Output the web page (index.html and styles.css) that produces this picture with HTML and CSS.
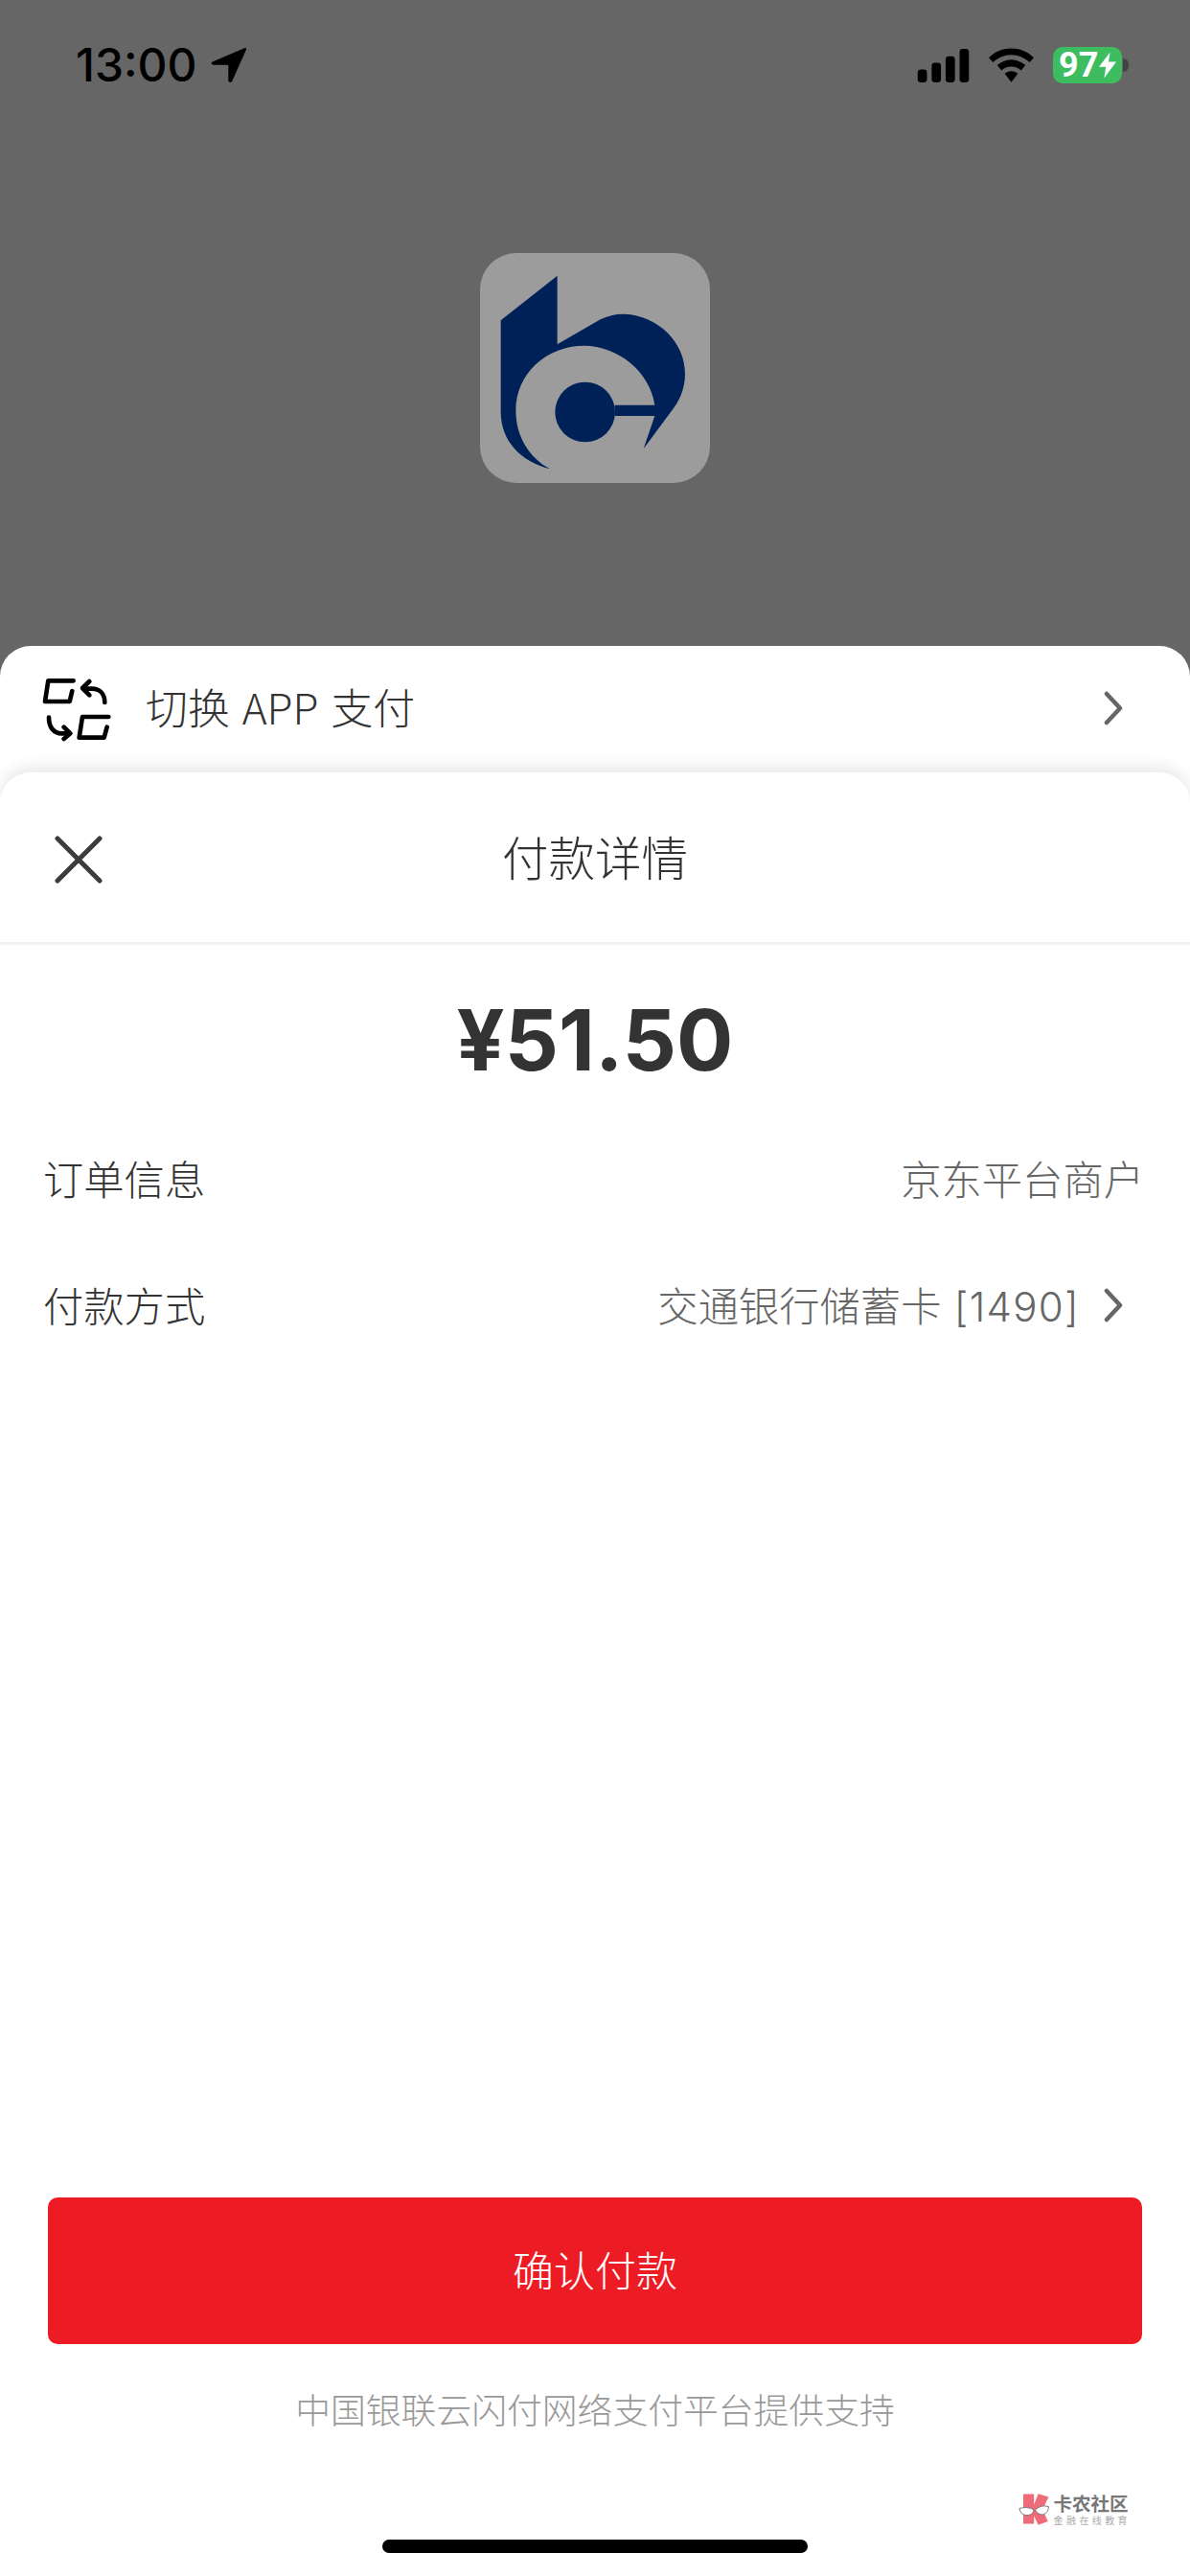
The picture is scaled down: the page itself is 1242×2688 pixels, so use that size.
FILE: index.html
```html
<!DOCTYPE html>
<html lang="zh-CN">
<head>
    <meta charset="UTF-8">
    <meta name="viewport" content="width=device-width, initial-scale=1.0">
    <title>付款详情</title>
    <link rel="stylesheet" href="styles.css">
</head>
<body>
    <div class="screen">
        <div class="status-bar">
            <div class="status-left">
                <span class="clock">13:00</span>
                <svg class="location" viewBox="0 0 110 110">
                    <path d="M103 3 L5 45 Q-2 50 6 54 L49 54 Q53 54 53 58 L53 103 Q58 111 64 104 L107 8 Q108 1 103 3 Z"/>
                </svg>
            </div>
            <div class="status-right">
                <svg class="signal" viewBox="0 0 56 36">
                    <rect x="0" y="22" width="10" height="14" rx="3.5"/>
                    <rect x="15" y="15" width="10" height="21" rx="3.5"/>
                    <rect x="30" y="8" width="10" height="28" rx="3.5"/>
                    <rect x="45" y="0" width="10" height="36" rx="3.5"/>
                </svg>
                <svg class="wifi" viewBox="0 0 48 36">
                    <path d="M24 0 C34 0 42 4 48 10 L43.500 15 C38 10 31.500 7 24 7 C16.500 7 10 10 4.500 15 L0 10 C6 4 14 0 24 0 Z"/>
                    <path d="M24 12 C30 12 35 14.500 39 18 L34.500 23.500 C31.500 21 28 19.500 24 19.500 C20 19.500 16.500 21 13.500 23.500 L9 18 C13 14.500 18 12 24 12 Z"/>
                    <path d="M24 24.500 C27 24.500 29 25.500 31 27 L24 36 L17 27 C19 25.500 21 24.500 24 24.500 Z"/>
                </svg>
                <div class="battery">
                    <div class="battery-body">
                        <span>97</span>
                        <svg class="bolt" viewBox="0 0 20 30">
                            <path d="M13 0 L0 17 H8 L6 30 L20 11 H11 Z"/>
                        </svg>
                    </div>
                    <div class="battery-nub"></div>
                </div>
            </div>
        </div>

        <div class="bank-logo">
            <svg viewBox="93 72 720 720">
                <path d="M158 283 L335 143 V358 L470 280 Q505 262 545 263 C650 268 735 350 735 450 C735 500 715 540 690 570 L605 685 L640 582 H515 V548 H640 C625 440 520 362 420 362 C300 362 205 450 205 565 C205 650 250 715 312 748 C220 725 158 660 158 570 Z"/>
                <circle cx="422" cy="570" r="94"/>
            </svg>
        </div>

        <div class="switch-sheet">
            <div class="switch-row">
                <svg class="switch-icon" viewBox="0 0 270 240">
                    <path d="M122 40 H43 L33 105 H110 L118 72"/>
                    <path d="M232 153 H150 L140 218 H218 L227 185"/>
                    <path d="M220 108 C220 82 205 65 180 65 H155"/>
                    <path d="M172 42 L150 63 L172 85"/>
                    <path d="M45 155 C45 185 60 205 85 205 H108"/>
                    <path d="M92 185 L112 205 L92 222"/>
                </svg>
                <span class="switch-label">切换 APP 支付</span>
                <svg class="chevron" viewBox="0 0 20 36">
                    <path d="M3 3 L17 18 L3 33"/>
                </svg>
            </div>

            <div class="pay-sheet">
                <div class="pay-header">
                    <svg class="close-icon" viewBox="0 0 50 50">
                        <path d="M3 3 L47 47 M47 3 L3 47"/>
                    </svg>
                    <span class="pay-title">付款详情</span>
                </div>

                <div class="amount">¥51.50</div>

                <div class="info-row">
                    <span>订单信息</span>
                    <span class="info-value">京东平台商户</span>
                </div>
                <div class="info-row">
                    <span>付款方式</span>
                    <span class="info-value">
                        <span>交通银行储蓄卡 <span class="card-no">[1490]</span></span>
                        <svg class="chevron" viewBox="0 0 20 36">
                            <path d="M3 3 L17 18 L3 33"/>
                        </svg>
                    </span>
                </div>

                <button class="confirm-btn">确认付款</button>
                <p class="support-text">中国银联云闪付网络支付平台提供支持</p>
                <div class="home-indicator"></div>

                <div class="watermark">
                    <svg class="watermark-logo" viewBox="125 120 105 110">
                        <path d="M143 125 H178 V160 L192 124 L226 134 L206 176 L224 214 L192 226 L178 196 V222 H143 Z" fill="#ef6b78"/>
                        <path d="M130 172 Q155 164 178 176 Q174 196 152 194 Q134 192 130 172 Z" fill="#fff" stroke="#777" stroke-width="3"/>
                        <path d="M182 176 Q204 158 226 166 Q226 186 208 192 Q190 194 182 176 Z" fill="#fff" stroke="#777" stroke-width="3"/>
                    </svg>
                    <div class="watermark-text">
                        <span class="watermark-name">卡农社区</span>
                        <span class="watermark-sub">金融在线教育</span>
                    </div>
                </div>
            </div>
        </div>
    </div>
</body>
</html>
```

FILE: styles.css
```css
* {
    margin: 0;
    padding: 0;
    box-sizing: border-box;
}

body {
    width: 1242px;
    height: 2688px;
    overflow: hidden;
    font-family: "Noto Sans CJK SC", "Noto Sans", sans-serif;
    background: #666666;
}

.screen {
    height: 2688px;
    display: flex;
    flex-direction: column;
    background: #666666;
}

/* status bar */
.status-bar {
    height: 132px;
    padding: 4px 64px 0 79px;
    display: flex;
    justify-content: space-between;
    align-items: center;
}

.status-left {
    display: flex;
    align-items: center;
    gap: 14px;
}

.clock {
    font-family: Inter, sans-serif;
    font-size: 48px;
    font-weight: 500;
    line-height: 48px;
    color: #000;
}

.location {
    width: 38px;
    height: 38px;
    fill: #000;
}

.status-right {
    display: flex;
    align-items: center;
}

.signal {
    width: 56px;
    height: 35px;
    fill: #000;
    margin-right: 19px;
}

.wifi {
    width: 47px;
    height: 36px;
    fill: #000;
    margin-right: 20px;
}

.battery {
    display: flex;
    align-items: center;
}

.battery-body {
    width: 72px;
    height: 38px;
    padding-left: 6px;
    border-radius: 10px;
    background: #3dbd60;
    display: flex;
    align-items: center;
    gap: 1px;
    color: #fff;
    font-family: Roboto, sans-serif;
    font-size: 36px;
    font-weight: 700;
    line-height: 38px;
}

.bolt {
    width: 18px;
    height: 28px;
    fill: #fff;
}

.battery-nub {
    width: 6px;
    height: 14px;
    margin-left: 1px;
    border-radius: 0 7px 7px 0;
    background: #444444;
}

/* bank logo */
.bank-logo {
    width: 240px;
    height: 240px;
    margin: 132px auto 170px 501px;
    border-radius: 38px;
    background: #9c9c9c;
}

.bank-logo svg {
    display: block;
    width: 100%;
    height: 100%;
    fill: #002157;
}

/* sheets */
.switch-sheet {
    flex: 1;
    display: flex;
    flex-direction: column;
    background: #fff;
    border-radius: 32px 32px 0 0;
}

.switch-row {
    height: 132px;
    padding: 0 70px 6px 46px;
    display: flex;
    align-items: center;
}

.switch-icon {
    width: 90px;
    height: 80px;
    margin-left: -10px;
    fill: none;
    stroke: #000;
    stroke-width: 14;
    stroke-linecap: round;
    stroke-linejoin: round;
}

.switch-label {
    flex: 1;
    margin-left: 26px;
    font-size: 44px;
    font-weight: 300;
    word-spacing: 3px;
    color: #333;
}

.chevron {
    width: 20px;
    height: 36px;
    margin-top: 4px;
    fill: none;
    stroke: #666;
    stroke-width: 4.500;
    stroke-linecap: round;
    stroke-linejoin: round;
}

.pay-sheet {
    flex: 1;
    position: relative;
    display: flex;
    flex-direction: column;
    background: #fff;
    border-radius: 32px 32px 0 0;
    box-shadow: 0 -6px 16px rgba(0, 0, 0, 0.09);
}

.pay-header {
    height: 180px;
    padding-bottom: 3px;
    position: relative;
    display: flex;
    align-items: center;
    justify-content: center;
    border-bottom: 3px solid #f2f2f2;
}

.close-icon {
    position: absolute;
    left: 57px;
    top: 66px;
    width: 50px;
    height: 50px;
    fill: none;
    stroke: #3c3c3c;
    stroke-width: 5;
    stroke-linecap: round;
}

.pay-title {
    font-size: 48.500px;
    font-weight: 300;
    color: #333;
}

.amount {
    height: 176px;
    padding-top: 22px;
    display: flex;
    align-items: center;
    justify-content: center;
    font-family: Inter, sans-serif;
    font-size: 88px;
    font-weight: 700;
    color: #333;
}

.info-row {
    height: 132px;
    padding: 0 48px 0 45px;
    display: flex;
    align-items: center;
    justify-content: space-between;
    font-size: 42.300px;
    font-weight: 300;
    color: #333;
}

.info-value {
    display: flex;
    align-items: center;
    gap: 25px;
    color: #666;
}

.card-no {
    margin-left: 4px;
    font-family: Inter, sans-serif;
    font-size: 42px;
    font-weight: 300;
    letter-spacing: 1.300px;
}

.info-value .chevron {
    margin-right: 22px;
}

.confirm-btn {
    width: 1142px;
    height: 153px;
    margin: auto 0 0 50px;
    padding-bottom: 6px;
    border: none;
    border-radius: 10px;
    background: #ed1c24;
    color: #fff;
    font-family: inherit;
    font-size: 43px;
    font-weight: 300;
}

.support-text {
    margin-top: 40px;
    text-align: center;
    font-size: 36.800px;
    font-weight: 300;
    line-height: 54px;
    color: #999;
}

.home-indicator {
    width: 444px;
    height: 14px;
    margin: 110px auto 24px;
    border-radius: 7px;
    background: #000;
}

/* forum watermark over the bottom corner */
.watermark {
    position: absolute;
    right: 62px;
    bottom: 52px;
    display: flex;
    align-items: center;
    gap: 4px;
}

.watermark-logo {
    width: 34px;
    height: 35px;
}

.watermark-text {
    display: flex;
    flex-direction: column;
    color: #777;
    line-height: 1;
}

.watermark-name {
    font-size: 19.500px;
    font-weight: 700;
}

.watermark-sub {
    margin-top: 3px;
    font-size: 10px;
    letter-spacing: 3.400px;
    color: #aaa;
}
```
